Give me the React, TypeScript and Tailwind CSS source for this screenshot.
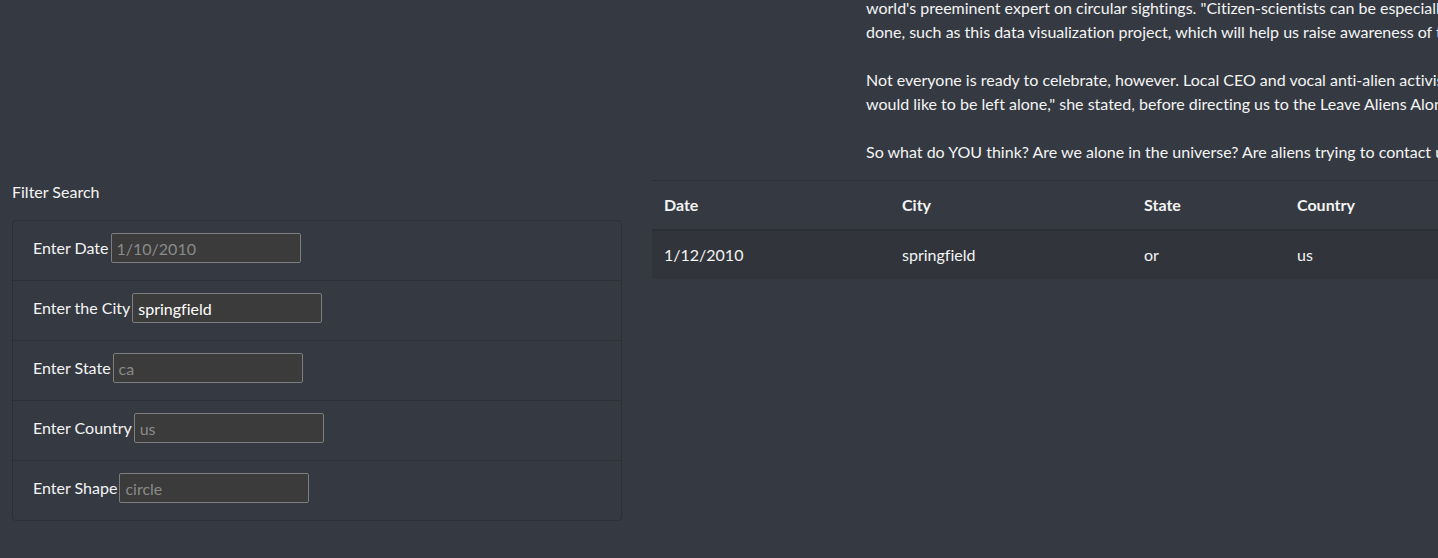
import React from "react";

const fields = [
  { label: "Enter Date", placeholder: "1/10/2010", value: "" },
  { label: "Enter the City", placeholder: "los angeles", value: "springfield" },
  { label: "Enter State", placeholder: "ca", value: "" },
  { label: "Enter Country", placeholder: "us", value: "" },
  { label: "Enter Shape", placeholder: "circle", value: "" },
];

export default function App() {
  return (
    <div
      className="h-[558px] w-[1438px] overflow-hidden bg-[#353a42] text-[16px] leading-6 text-[#f4f4f4] [font-variant-ligatures:none]"
      style={{ fontFamily: "Lato, 'Open Sans', sans-serif" }}
    >
      <div className="-mt-[4px] w-[1900px] pl-[866px]">
        <p className="mb-6 whitespace-nowrap">
          world's preeminent expert on circular sightings. "Citizen-scientists can be especially helpful in getting the word out about their findings,"
          <br />
          done, such as this data visualization project, which will help us raise awareness of the phenomenon and gather more data."
        </p>
        <p className="mb-6 whitespace-nowrap">
          Not everyone is ready to celebrate, however. Local CEO and vocal anti-alien activist Mayor Mary Smith is skeptical. "I think the aliens
          <br />
          would like to be left alone," she stated, before directing us to the Leave Aliens Alone website.
        </p>
        <p className="mb-4 whitespace-nowrap">
          So what do YOU think? Are we alone in the universe? Are aliens trying to contact us? Look at the data and decide for yourself.
        </p>
      </div>

      <div className="flex w-[2000px]">
        <div className="w-[640px] shrink-0 px-3">
          <h4 className="mb-4 text-[16px] leading-6">Filter Search</h4>
          <ul className="w-[610px] rounded border border-[#2c3036]">
            {fields.map((f, i) => (
              <li
                key={f.label}
                className={`flex h-[59px] items-start px-5 pt-3 ${i < fields.length - 1 ? "h-[60px] border-b border-[#2c3036]" : ""}`}
              >
                <div className="flex h-[30px] items-center gap-[2px]">
                  <label>{f.label}</label>
                  <input
                    type="text"
                    defaultValue={f.value}
                    placeholder={f.placeholder}
                    className="h-[30px] w-[190px] rounded-[2px] border border-[#7d7d7d] bg-[#3b3b3b] px-[5px] text-[16px] text-white [font-variant-ligatures:none] placeholder:text-[#8a8a8a] focus:outline-none"
                  />
                </div>
              </li>
            ))}
          </ul>
        </div>

        <div className="shrink-0 pl-3">
          <table className="border-collapse text-left">
            <thead>
              <tr className="border-t border-b-2 border-[#2c3036]">
                <th className="w-[238px] px-3 py-3 font-bold">Date</th>
                <th className="w-[242px] px-3 py-3 font-bold">City</th>
                <th className="w-[153px] px-3 py-3 font-bold">State</th>
                <th className="w-[170px] px-3 py-3 font-bold">Country</th>
                <th className="w-[150px] px-3 py-3 font-bold">Shape</th>
                <th className="w-[150px] px-3 py-3 font-bold">Duration</th>
                <th className="w-[300px] px-3 py-3 font-bold">Comments</th>
              </tr>
            </thead>
            <tbody>
              <tr className="bg-[#31353b]">
                <td className="px-3 py-3">1/12/2010</td>
                <td className="px-3 py-3">springfield</td>
                <td className="px-3 py-3">or</td>
                <td className="px-3 py-3">us</td>
                <td className="px-3 py-3">circle</td>
                <td className="px-3 py-3">5 mins.</td>
                <td className="px-3 py-3">Bright circle in the sky</td>
              </tr>
            </tbody>
          </table>
        </div>
      </div>
    </div>
  );
}
